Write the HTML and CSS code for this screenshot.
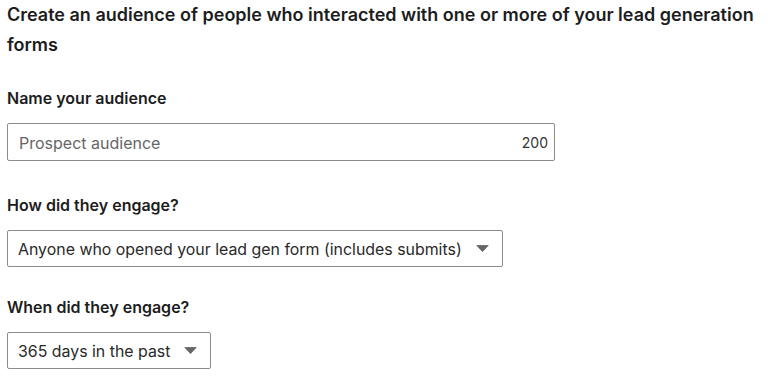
FILE: index.html
```html
<!DOCTYPE html>
<html lang="en">
<head>
<meta charset="utf-8">
<title>Create audience</title>
<link rel="stylesheet" href="styles.css">
</head>
<body>
<main class="page">
  <h1 class="title">Create an audience of people who interacted with one or more of your lead generation forms</h1>

  <div class="field field-name">
    <label class="label" for="aud-name">Name your audience</label>
    <div class="textbox">
      <input id="aud-name" class="textbox-input" type="text" placeholder="Prospect audience">
      <span class="counter">200</span>
    </div>
  </div>

  <div class="field field-how">
    <div class="label">How did they engage?</div>
    <div class="select">
      <span class="select-text">Anyone who opened your lead gen form (includes submits)</span>
      <svg class="caret" width="13" height="7" viewBox="0 0 13 7"><path d="M0.8 0.5 H12.2 L6.5 6.6 Z" fill="#666" stroke="#666" stroke-width="0.8" stroke-linejoin="round"/></svg>
    </div>
  </div>

  <div class="field field-when">
    <div class="label">When did they engage?</div>
    <div class="select">
      <span class="select-text">365 days in the past</span>
      <svg class="caret" width="13" height="7" viewBox="0 0 13 7"><path d="M0.8 0.5 H12.2 L6.5 6.6 Z" fill="#666" stroke="#666" stroke-width="0.8" stroke-linejoin="round"/></svg>
    </div>
  </div>
</main>
</body>
</html>
```
FILE: styles.css
```css
* { box-sizing: border-box; }

body {
  margin: 0;
  background: #ffffff;
  color: #1d1d1d;
  font-family: Inter, "Liberation Sans", sans-serif;
}

.page {
  padding-left: 7px;
  display: flex;
  flex-direction: column;
  align-items: flex-start;
}

.title {
  margin: 0 0 28px 0;
  font-size: 18px;
  font-weight: 600;
  line-height: 30px;
  color: #1d1d1d;
}

.field {
  display: flex;
  flex-direction: column;
  align-items: flex-start;
}

.field-name { margin-bottom: 34px; }
.field-how { margin-bottom: 30px; }

.label {
  font-size: 16px;
  font-weight: 600;
  line-height: 20px;
  margin-bottom: 15px;
  color: #1d1d1d;
}

.textbox {
  width: 548px;
  height: 38px;
  border: 1px solid #8c8c8c;
  border-radius: 2px;
  display: flex;
  align-items: center;
  padding: 1px 6px 0 11px;
}

.textbox-input {
  flex: 1;
  border: 0;
  outline: none;
  padding: 0;
  background: transparent;
  font-family: Inter, "Liberation Sans", sans-serif;
  font-size: 16px;
  color: #1d1d1d;
}

.textbox-input::placeholder {
  color: #666666;
  opacity: 1;
}

.counter {
  font-size: 14px;
  color: #333333;
}

.select {
  height: 37px;
  border: 1px solid #8c8c8c;
  border-radius: 2px;
  display: inline-flex;
  align-items: center;
  gap: 14px;
  padding: 0 13px 0 10px;
}

.select-text {
  font-size: 15.9px;
  color: #2a2a2a;
  white-space: nowrap;
  padding-top: 1px;
}

.caret { display: block; }
```
